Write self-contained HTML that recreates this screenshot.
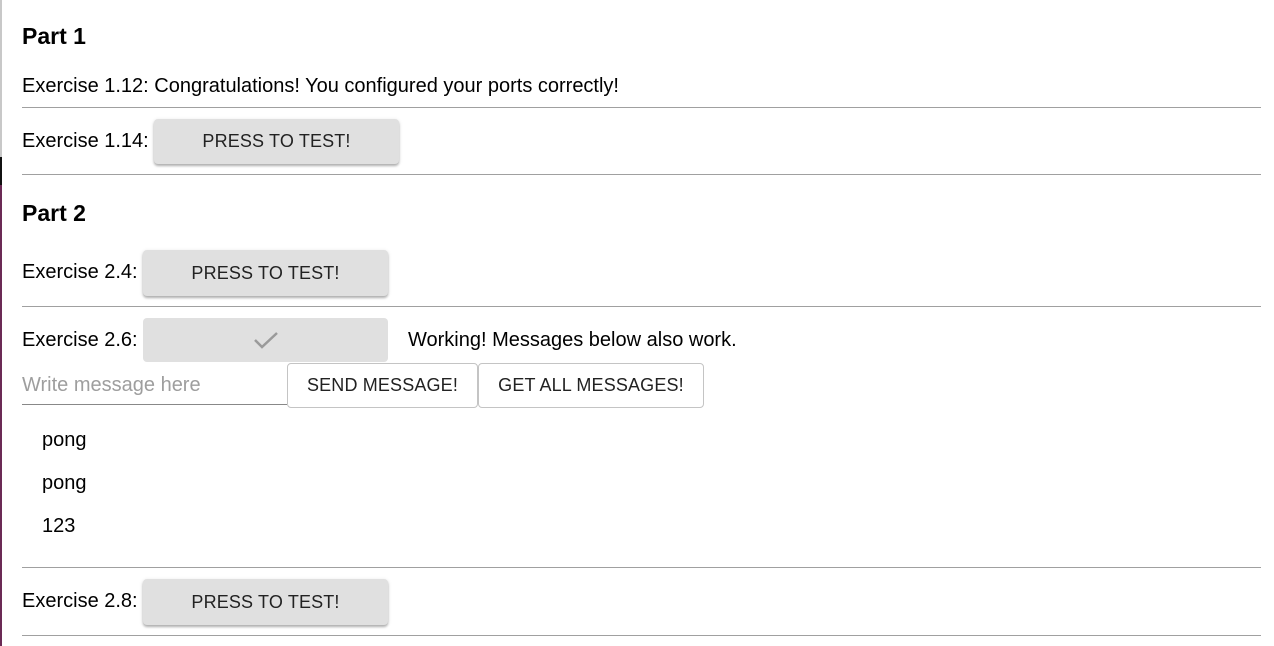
<!DOCTYPE html>
<html><head><style>
body{margin:0;width:1274px;height:646px;position:relative;background:#fff;font-family:"Liberation Sans",sans-serif;color:#000;overflow:hidden}
.a{position:absolute;white-space:nowrap}
.t{font-size:20px;line-height:24px}
.h{font-size:23px;font-weight:bold;line-height:26px}
.hr{position:absolute;left:22px;width:1239px;height:1px;background:#a0a0a0}
.b{position:absolute;background:#e0e0e0;border-radius:4px;box-shadow:0 2px 2px rgba(0,0,0,.25),0 1px 4px rgba(0,0,0,.12);font-size:18px;letter-spacing:.15px;color:#222;display:flex;align-items:center;justify-content:center}
.o{position:absolute;background:#fff;border:1px solid #c4c4c4;border-radius:4px;font-size:18px;letter-spacing:.15px;color:#222;display:flex;align-items:center;justify-content:center;box-sizing:border-box}
</style></head><body>
<div style="position:absolute;left:0;top:0;width:2px;height:157px;background:#c8c8c8"></div>
<div style="position:absolute;left:0;top:157px;width:2px;height:28px;background:#111"></div>
<div style="position:absolute;left:0;top:185px;width:2px;height:461px;background:#6b2a55"></div>
<div class="a h" style="left:22px;top:23px">Part 1</div>
<div class="a t" style="left:22px;top:74px">Exercise 1.12: Congratulations! You configured your ports correctly!</div>
<div class="hr" style="top:107px"></div>
<div class="a t" style="left:22px;top:129px">Exercise 1.14:</div>
<div class="b" style="left:154px;top:119px;width:245px;height:45px">PRESS TO TEST!</div>
<div class="hr" style="top:174px"></div>
<div class="a h" style="left:22px;top:200px">Part 2</div>
<div class="a t" style="left:22px;top:260px">Exercise 2.4:</div>
<div class="b" style="left:143px;top:250px;width:245px;height:46px">PRESS TO TEST!</div>
<div class="hr" style="top:306px"></div>
<div class="a t" style="left:22px;top:328px">Exercise 2.6:</div>
<div class="b" style="left:143px;top:318px;width:245px;height:44px;box-shadow:none"><svg width="26" height="20" viewBox="0 0 26 20"><path d="M2 10l7 7L24 3" fill="none" stroke="#9a9a9a" stroke-width="2.5"/></svg></div>
<div class="a t" style="left:408px;top:328px">Working! Messages below also work.</div>
<div class="a t" style="left:22px;top:373px;color:#9e9e9e">Write message here</div>
<div style="position:absolute;left:22px;top:404px;width:265px;height:1px;background:#888"></div>
<div class="o" style="left:287px;top:363px;width:191px;height:45px">SEND MESSAGE!</div>
<div class="o" style="left:478px;top:363px;width:226px;height:45px">GET ALL MESSAGES!</div>
<div class="a t" style="left:42px;top:428px">pong</div>
<div class="a t" style="left:42px;top:471px">pong</div>
<div class="a t" style="left:42px;top:514px">123</div>
<div class="hr" style="top:567px"></div>
<div class="a t" style="left:22px;top:589px">Exercise 2.8:</div>
<div class="b" style="left:143px;top:579px;width:245px;height:46px">PRESS TO TEST!</div>
<div class="hr" style="top:635px"></div>
</body></html>
